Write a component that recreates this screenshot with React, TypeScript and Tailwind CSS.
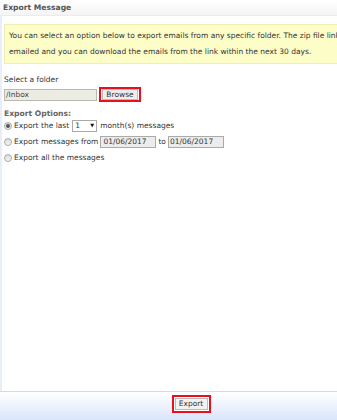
export default function App() {
  return (
    <div className="flex h-[420px] w-[337px] flex-col overflow-hidden bg-white font-['DejaVu_Sans',sans-serif] text-[7.5px] text-[#333]">
      <div className="h-[16px] border-b border-[#ececec] bg-gradient-to-b from-white to-[#f4f4f4] pl-[3px] pt-[2px] text-[7.6px] font-bold leading-[12px] text-[#555]">
        Export Message
      </div>
      <div className="flex flex-1 flex-col overflow-hidden border-l-2 border-[#e9eefb] pl-[2px]">
        <div className="mt-[8px] w-[340px] border border-[#efedb4] bg-[#fdfdc8] py-[3px] pl-[4px] leading-[16px] text-[#333]">
          <p className="whitespace-nowrap">You can select an option below to export emails from any specific folder. The zip file links</p>
          <p>emailed and you can download the emails from the link within the next 30 days.</p>
        </div>

        <p className="mt-[10px] leading-[11px]">Select a folder</p>
        <div className="mt-[2px] flex items-center gap-[2px]">
          <div className="h-[12px] w-[93px] border border-[#b9b9b0] bg-[#ecece4] pl-[1px] leading-[10px] text-[#444]">/Inbox</div>
          <div className="flex h-[15px] w-[42px] items-center justify-center border-2 border-[#e8101c] bg-white">
            <div className="flex h-[11px] w-[36px] items-center justify-center border border-[#bbb] bg-[#eeeeee] text-[#333]">Browse</div>
          </div>
        </div>

        <p className="mt-[6px] text-[7.6px] font-bold leading-[11px] text-[#666]">Export Options:</p>
        <div className="flex h-[14px] items-center gap-[2px]">
          <Radio checked />
          <span>Export the last</span>
          <div className="ml-[1px] flex h-[12px] w-[25px] items-center justify-between border border-[#aaa] bg-white px-[2px]">
            <span>1</span>
            <span className="text-[5px] text-[#111]">▼</span>
          </div>
          <span className="ml-[1px]">month(s) messages</span>
        </div>
        <div className="mt-[2px] flex h-[14px] items-center gap-[2px]">
          <Radio />
          <span>Export messages from</span>
          <div className="h-[12px] w-[56px] border border-[#aaa] bg-[#ececec] pl-[2px] leading-[10px]">01/06/2017</div>
          <span>to</span>
          <div className="h-[12px] w-[56px] border border-[#aaa] bg-[#ececec] pl-[1px] leading-[10px]">01/06/2017</div>
        </div>
        <div className="mt-[2px] flex h-[14px] items-center gap-[2px]">
          <Radio />
          <span>Export all the messages</span>
        </div>
      </div>
      <div className="flex h-[29px] items-start justify-center border-t border-[#cddaf3] bg-gradient-to-b from-white to-[#dae5fb] pl-[45px] pt-[3px]">
        <div className="flex h-[18px] w-[39px] items-center justify-center border-2 border-[#e8101c] bg-white">
          <div className="flex h-[12px] w-[33px] items-center justify-center border border-[#bbb] bg-[#f2f2f2] text-[#333]">Export</div>
        </div>
      </div>
    </div>
  )
}

function Radio({ checked = false }: { checked?: boolean }) {
  return (
    <span className="flex h-[8px] w-[8px] items-center justify-center rounded-full border border-[#aaa] bg-gradient-to-b from-[#dcdcdc] to-[#f6f6f6]">
      {checked && <span className="h-[4px] w-[4px] rounded-full bg-[#555]" />}
    </span>
  )
}
